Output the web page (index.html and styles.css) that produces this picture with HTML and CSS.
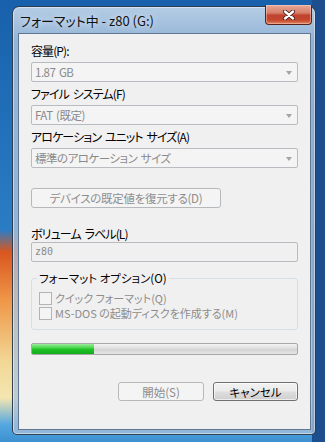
FILE: index.html
```html
<!DOCTYPE html>
<html lang="ja">
<head>
    <meta charset="UTF-8">
    <meta name="viewport" content="width=device-width, initial-scale=1.0">
    <title>フォーマット中 - z80 (G:)</title>
    <link rel="stylesheet" href="styles.css">
</head>
<body>
    <div class="desktop">
        <div class="window">
            <div class="titlebar">
                <span class="title">フォーマット中 - z80 (G:)</span>
                <button class="close-button" aria-label="閉じる">
                    <svg width="14" height="10" viewBox="0 0 14 10">
                        <path d="M3 1.5 L11 8.5 M11 1.5 L3 8.5" stroke="#3a1a14" stroke-width="4" stroke-linecap="round"/>
                        <path d="M3 1.5 L11 8.5 M11 1.5 L3 8.5" stroke="#fff" stroke-width="2.4" stroke-linecap="round"/>
                    </svg>
                </button>
            </div>

            <div class="client">
                <div class="field">
                    <label>容量(P):</label>
                    <div class="combo"><span>1.87 GB</span><span class="arrow"></span></div>
                </div>
                <div class="field">
                    <label>ファイル システム(F)</label>
                    <div class="combo"><span>FAT (既定)</span><span class="arrow"></span></div>
                </div>
                <div class="field">
                    <label>アロケーション ユニット サイズ(A)</label>
                    <div class="combo"><span>標準のアロケーション サイズ</span><span class="arrow"></span></div>
                </div>

                <button class="btn restore-button" disabled>デバイスの既定値を復元する(D)</button>

                <div class="field field-volume">
                    <label>ボリューム ラベル(L)</label>
                    <div class="textbox">z80</div>
                </div>

                <fieldset class="options">
                    <legend>フォーマット オプション(O)</legend>
                    <label class="check"><span class="box"></span>クイック フォーマット(Q)</label>
                    <label class="check"><span class="box"></span>MS-DOS の起動ディスクを作成する(M)</label>
                </fieldset>

                <div class="progress">
                    <div class="progress-fill" style="width: 23.5%"></div>
                </div>

                <div class="actions">
                    <button class="btn start-button" disabled>開始(S)</button>
                    <button class="btn cancel-button">キャンセル</button>
                </div>
            </div>
        </div>
    </div>
</body>
</html>
```

FILE: styles.css
```css
* {
    margin: 0;
    padding: 0;
    box-sizing: border-box;
}

body {
    font-family: "Noto Sans CJK JP", "Liberation Sans", sans-serif;
    font-size: 11px;
    line-height: 16px;
    font-feature-settings: "palt";
    color: #000;
}

/* デスクトップ背景 */
.desktop {
    width: 325px;
    height: 442px;
    padding: 6px 9px 7px 12px;
    background:
        linear-gradient(90deg, transparent 0, transparent 312px, #1d4f8e 312px),
        linear-gradient(180deg, #1860ab 0%, #2a7dc5 52%, #d9561f 57%, #ef9748 68%, #f2d896 82%, #f4e6b0 90%, #55a8e0 96%, #3c90d0 100%);
}

.window {
    width: 304px;
    height: 429px;
    display: flex;
    flex-direction: column;
    border: 1px solid rgba(28, 42, 60, 0.85);
    border-radius: 7px 7px 5px 5px;
    background: linear-gradient(180deg, rgba(215, 228, 242, 0.82) 0%, rgba(182, 203, 226, 0.78) 8%, rgba(170, 192, 216, 0.75) 100%);
    box-shadow: inset 0 0 0 1px rgba(255, 255, 255, 0.45);
}

.titlebar {
    height: 26px;
    display: flex;
    align-items: center;
    justify-content: space-between;
    padding: 0 3px 0 7px;
}

.title {
    font-size: 13px;
    color: #111;
    text-shadow: 0 0 6px rgba(255, 255, 255, 0.9);
    margin-top: 1px;
}

.close-button {
    align-self: flex-start;
    margin-top: -2px;
    width: 47px;
    height: 20px;
    display: flex;
    align-items: center;
    justify-content: center;
    border: 1px solid #5a231b;
    border-top: none;
    border-radius: 0 0 4px 4px;
    background: linear-gradient(180deg, #e9a898 0%, #d7806c 40%, #c0412e 55%, #c6482f 80%, #e0855c 100%);
    box-shadow: inset 0 0 0 1px rgba(255, 220, 210, 0.45);
}

.client {
    flex: 1;
    margin: 0 4px 4px 5px;
    border: 1px solid #5f7792;
    background: #f0f0f0;
    padding: 9px 12px 0;
    display: flex;
    flex-direction: column;
}

.field {
    display: flex;
    flex-direction: column;
    margin-bottom: 4px;
}

.field label {
    font-size: 12px;
    line-height: 16px;
    margin-bottom: 3px;
    letter-spacing: -0.9px;
    word-spacing: 2px;
}

.combo {
    height: 20px;
    display: flex;
    align-items: center;
    justify-content: space-between;
    padding: 0 5px 0 3px;
    border: 1px solid #b8bcc0;
    border-radius: 2px;
    background: #f4f4f4;
    color: #8a8a8a;
    font-size: 11.5px;
    letter-spacing: -0.5px;
    word-spacing: 1.5px;
}

.arrow {
    width: 0;
    height: 0;
    border-left: 3.5px solid transparent;
    border-right: 3.5px solid transparent;
    border-top: 4px solid #a4a4a4;
    margin-top: 1px;
}

.btn {
    font-family: inherit;
    font-size: 11.5px;
    line-height: 16px;
    font-feature-settings: "palt";
    height: 19px;
    border-radius: 3px;
    display: flex;
    align-items: center;
    justify-content: center;
}

.btn:disabled {
    border: 1px solid #b5b9bc;
    background: #f4f4f4;
    color: #8d8d8d;
}

.restore-button {
    width: 190px;
    height: 20px;
    margin-top: 16px;
    letter-spacing: -0.3px;
}

.field-volume {
    margin-top: 18px;
}

.field-volume label {
    margin-bottom: 0;
}

.textbox {
    height: 20px;
    display: flex;
    align-items: center;
    padding-left: 3px;
    border: 1px solid #b8bcc0;
    border-radius: 2px;
    background: #f0f0f0;
    color: #8a8a8a;
    font-family: "DejaVu Sans Mono", monospace;
    font-size: 10px;
}

.options {
    margin-top: 4px;
    padding: 5px 7px 8px;
    border: 1px solid #d5dfe5;
    border-radius: 3px;
    display: flex;
    flex-direction: column;
}

.options legend {
    font-size: 11.5px;
    line-height: 16px;
    padding: 0 2px;
    margin-left: -2px;
}

.check {
    height: 15px;
    line-height: 15px;
    display: flex;
    align-items: center;
    color: #8d8d8d;
}

.box {
    width: 13px;
    height: 13px;
    margin-right: 3px;
    border: 1px solid #b4b4b4;
    background: #f4f4f4;
}

.progress {
    margin-top: 13px;
    height: 12px;
    border: 1px solid #a8a8a8;
    border-radius: 2px;
    background: linear-gradient(180deg, #f2f2f2 0%, #dedede 45%, #d4d4d4 55%, #e4e4e4 100%);
    overflow: hidden;
}

.progress-fill {
    height: 100%;
    background: linear-gradient(180deg, #9cec9c 0%, #4fd851 35%, #1fc126 55%, #12ad1d 100%);
}

.actions {
    margin-top: 27px;
    display: flex;
    justify-content: flex-end;
    gap: 9px;
}

.start-button {
    width: 86px;
}

.cancel-button {
    width: 85px;
    border: 1px solid #707070;
    background: linear-gradient(180deg, #f2f2f2 0%, #ebebeb 45%, #dddddd 55%, #cfcfcf 100%);
    color: #000;
    box-shadow: inset 0 0 0 1px rgba(255, 255, 255, 0.6);
}
```
